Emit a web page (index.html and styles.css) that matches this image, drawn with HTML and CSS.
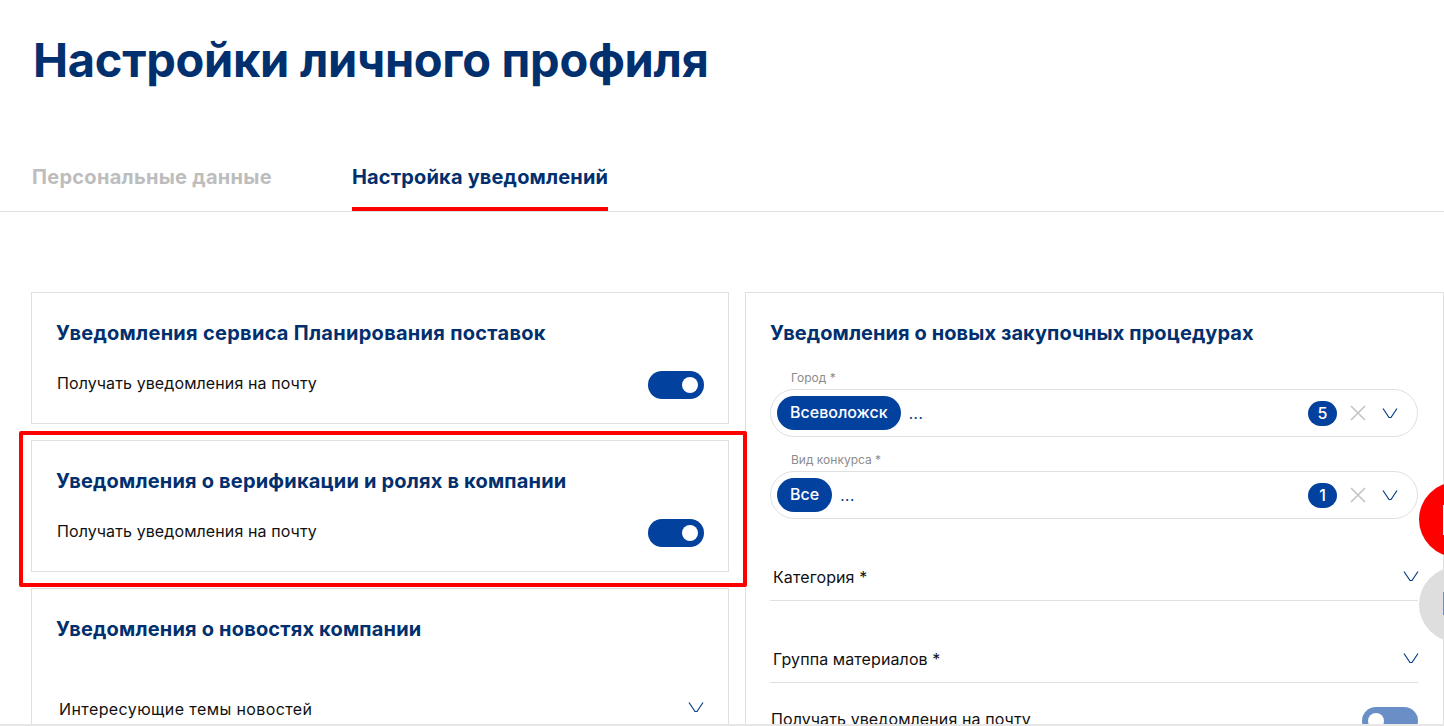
FILE: index.html
```html
<!DOCTYPE html>
<html lang="ru">
<head>
<meta charset="utf-8">
<title>Настройки личного профиля</title>
<link rel="stylesheet" href="styles.css">
</head>
<body>
<svg class="defs" width="0" height="0" aria-hidden="true">
  <symbol id="chev" viewBox="0 0 16 12"><path d="M1 1.5 L7 10.5 H9 L15 1.5" fill="none" stroke="#033d85" stroke-width="1.2"/></symbol>
  <symbol id="cross" viewBox="0 0 16 16"><path d="M1 1 L15 15 M15 1 L1 15" fill="none" stroke="#c4c4c4" stroke-width="1.6"/></symbol>
</svg>
<div class="page">
  <h1 class="title">Настройки личного профиля</h1>
  <nav class="tabs">
    <a class="tab">Персональные данные</a>
    <a class="tab active">Настройка уведомлений</a>
  </nav>
  <main class="columns">
    <div class="col">
      <section class="card card-supply">
        <h2 class="card-title">Уведомления сервиса Планирования поставок</h2>
        <div class="row"><span class="row-text">Получать уведомления на почту</span><span class="toggle"><i></i></span></div>
      </section>
      <section class="card">
        <h2 class="card-title">Уведомления о верификации и ролях в компании</h2>
        <div class="row"><span class="row-text">Получать уведомления на почту</span><span class="toggle"><i></i></span></div>
      </section>
      <section class="card card-news">
        <h2 class="card-title">Уведомления о новостях компании</h2>
        <div class="news-row"><span class="row-text">Интересующие темы новостей</span><svg class="chev"><use href="#chev"/></svg></div>
      </section>
    </div>
    <div class="col">
      <section class="card card-right">
        <h2 class="card-title">Уведомления о новых закупочных процедурах</h2>
        <div class="field">
          <label class="field-label">Город *</label>
          <div class="pill-input">
            <span class="chip">Всеволожск</span><span class="more">...</span>
            <span class="count">5</span><svg class="cross"><use href="#cross"/></svg><svg class="chev"><use href="#chev"/></svg>
          </div>
        </div>
        <div class="field">
          <label class="field-label">Вид конкурса *</label>
          <div class="pill-input">
            <span class="chip">Все</span><span class="more">...</span>
            <span class="count">1</span><svg class="cross"><use href="#cross"/></svg><svg class="chev"><use href="#chev"/></svg>
          </div>
        </div>
        <div class="select"><span class="row-text">Категория *</span><svg class="chev"><use href="#chev"/></svg></div>
        <div class="select"><span class="row-text">Группа материалов *</span><svg class="chev"><use href="#chev"/></svg></div>
        <div class="row row-mail"><span class="row-text">Получать уведомления на почту</span><span class="toggle dim"><i></i></span></div>
      </section>
    </div>
  </main>
</div>
<div class="highlight"></div>
<div class="fab fab-red"><b></b></div>
<div class="fab fab-gray"><b></b></div>
<div class="bottom-line"></div>
</body>
</html>
```
FILE: styles.css
```css
* { box-sizing: border-box; }
html, body { margin: 0; height: 726px; overflow: hidden; background: #fff; }
body { font-family: Inter, "Noto Sans", sans-serif; color: #111; position: relative; }
.defs { position: absolute; }
.page { height: 726px; overflow: hidden; }
.title { margin: 0; padding: 36px 0 0 33px; height: 129px; font-size: 47px; line-height: 48px; font-weight: 700; color: #022f6d; letter-spacing: -0.3px; }
.tabs { display: flex; gap: 80px; height: 83px; padding: 30px 0 0 32px; border-bottom: 1px solid #e0e0e0; }
.tab { height: 52px; line-height: 36px; font-size: 20px; font-weight: 700; letter-spacing: 0.28px; color: #bdbdbd; }
.tab.active { color: #022f6d; letter-spacing: 0.17px; border-bottom: 4px solid #f00; }
.columns { display: flex; gap: 16px; height: 514px; overflow: hidden; padding: 80px 0 0 31px; }
.col { display: flex; flex-direction: column; gap: 16px; }
.col:first-child { width: 698px; }
.col:last-child { width: 699px; }
.card { flex: none; border: 1px solid #e0e0e0; padding: 26px 24px 0 25px; height: 132px; }
.card .card-title { margin-left: -1px; }
.card-news { height: 300px; }
.card-right { height: 500px; padding-left: 24px; padding-right: 25px; }
.card-right .card-title { margin-left: 0; letter-spacing: 0.08px; }
.card-supply .card-title { letter-spacing: 0.28px; }
.card-title { margin: 0; font-size: 20px; line-height: 28px; font-weight: 700; letter-spacing: 0.18px; color: #022f6d; }
.row { display: flex; justify-content: space-between; align-items: flex-start; height: 28px; margin-top: 24px; }
.row-mail .row-text { margin-left: 1px; }
.row-text { font-size: 16px; line-height: 24px; letter-spacing: 0.1px; color: #111; }
.toggle { width: 56px; height: 28px; border-radius: 14px; background: #03419f; display: flex; align-items: center; justify-content: flex-end; padding-right: 6px; }
.toggle i { width: 16px; height: 16px; border-radius: 50%; background: #fff; }
.toggle.dim { background: #6a8fc7; justify-content: flex-start; padding-left: 6px; }
.news-row { display: flex; justify-content: space-between; align-items: flex-start; margin-top: 54px; padding-left: 2px; }
.news-row .row-text { letter-spacing: 0.4px; }
.news-row .chev { margin-top: 4px; }
.chev { width: 16px; height: 12px; flex: none; }
.cross { width: 16px; height: 16px; flex: none; }
.field { margin-top: 15px; }
.card-title + .field { margin-top: 23px; }
.field-label { display: block; font-size: 12px; line-height: 16px; margin-bottom: 3px; color: #8c8c8c; padding-left: 21px; }
.pill-input { display: flex; align-items: center; height: 48px; border: 1px solid #e0e0e0; border-radius: 24px; padding: 0 19px 0 6px; }
.chip { background: #03419f; color: #fff; font-size: 16px; line-height: 33px; height: 34px; padding: 0 13px; border-radius: 17px; font-weight: 500; }
.more { margin-left: 8px; font-size: 15px; letter-spacing: 0.6px; color: #033d85; }
.count { margin-left: auto; width: 29px; height: 25px; border-radius: 13px; background: #03419f; color: #fff; font-size: 16px; font-weight: 500; text-align: center; line-height: 25px; }
.pill-input .cross { margin-left: 13px; }
.pill-input .chev { margin-left: 16px; }
.select { display: flex; justify-content: space-between; align-items: center; height: 49px; margin-top: 33px; padding-left: 3px; border-bottom: 1px solid #e0e0e0; }
.select .row-text { margin-top: 2px; }
.select .chev { margin-right: -1px; }
.highlight { position: absolute; left: 19px; top: 431px; width: 728px; height: 156px; border: 4px solid #f00; border-radius: 2px; }
.fab { position: absolute; left: 1419px; width: 75px; height: 75px; border-radius: 50%; }
.fab-red { top: 482px; background: #f00; }
.fab-gray { top: 567px; background: #dedede; }
.fab b { position: absolute; left: 24px; width: 3px; }
.fab-red b { top: 23px; height: 30px; background: #fff; }
.fab-gray b { top: 25px; height: 23px; background: #6a8fc7; }
.bottom-line { position: absolute; left: 0; top: 724px; width: 1444px; height: 2px; background: #e6e6e6; }
```
